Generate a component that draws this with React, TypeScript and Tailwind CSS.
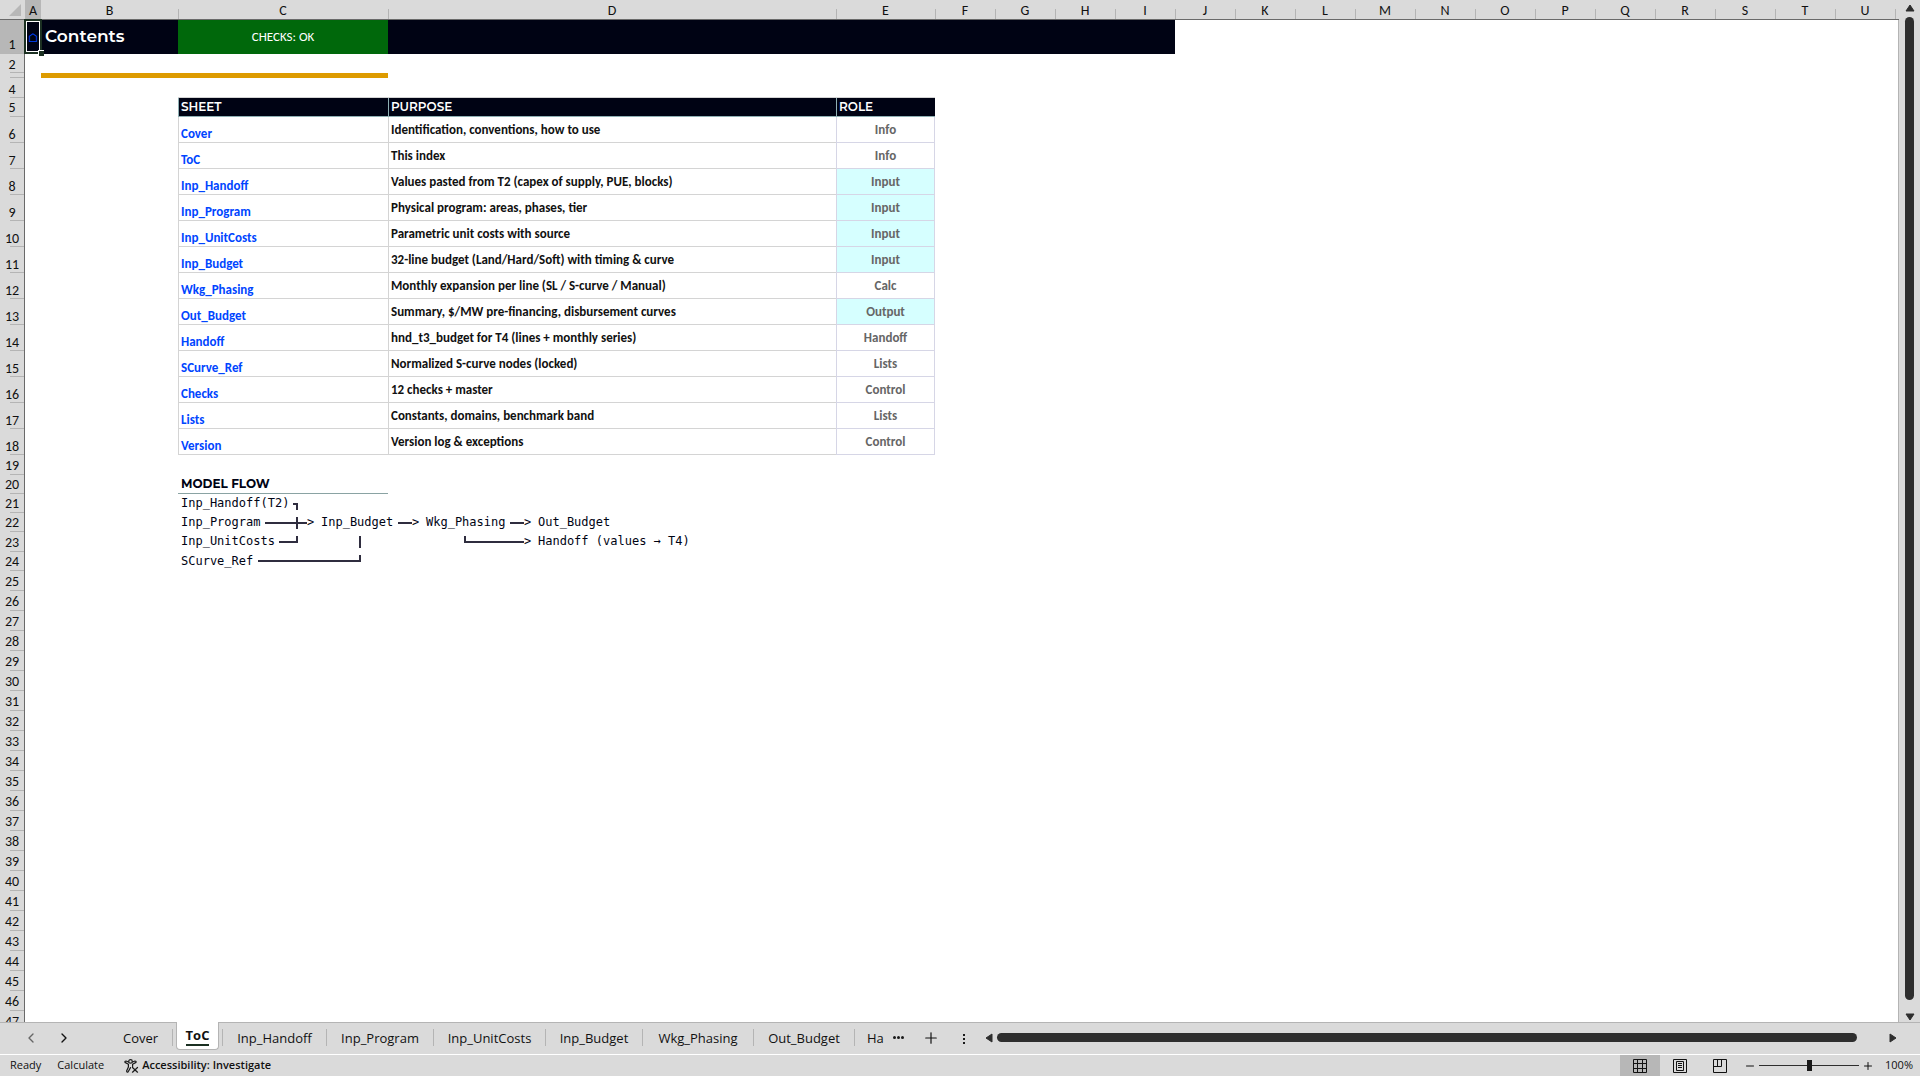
import { useState } from 'react';
import type { ReactNode } from 'react';
import { ChevronLeft, ChevronRight, Plus, Minus } from 'lucide-react';
import clsx from 'clsx';

const letters = 'ABCDEFGHIJKLMNOPQRSTU'.split('');

const sheets = [
  { row: 6, name: 'Cover', purpose: 'Identification, conventions, how to use', role: 'Info' },
  { row: 7, name: 'ToC', purpose: 'This index', role: 'Info' },
  { row: 8, name: 'Inp_Handoff', purpose: 'Values pasted from T2 (capex of supply, PUE, blocks)', role: 'Input' },
  { row: 9, name: 'Inp_Program', purpose: 'Physical program: areas, phases, tier', role: 'Input' },
  { row: 10, name: 'Inp_UnitCosts', purpose: 'Parametric unit costs with source', role: 'Input' },
  { row: 11, name: 'Inp_Budget', purpose: '32-line budget (Land/Hard/Soft) with timing & curve', role: 'Input' },
  { row: 12, name: 'Wkg_Phasing', purpose: 'Monthly expansion per line (SL / S-curve / Manual)', role: 'Calc' },
  { row: 13, name: 'Out_Budget', purpose: 'Summary, $/MW pre-financing, disbursement curves', role: 'Output' },
  { row: 14, name: 'Handoff', purpose: 'hnd_t3_budget for T4 (lines + monthly series)', role: 'Handoff' },
  { row: 15, name: 'SCurve_Ref', purpose: 'Normalized S-curve nodes (locked)', role: 'Lists' },
  { row: 16, name: 'Checks', purpose: '12 checks + master', role: 'Control' },
  { row: 17, name: 'Lists', purpose: 'Constants, domains, benchmark band', role: 'Lists' },
  { row: 18, name: 'Version', purpose: 'Version log & exceptions', role: 'Control' },
];

// each step takes a number of 7px character cells; `line` is a connector path
type Step = { text?: string; line?: string; cells: number };

const flow: { row: number; height: string; steps: Step[] }[] = [
  {
    row: 21,
    height: 'h-[19px]',
    steps: [
      { text: 'Inp_Handoff(T2)', cells: 16 },
      { line: 'M0 10H4V16', cells: 1 },
    ],
  },
  {
    row: 22,
    height: 'h-[19px]',
    steps: [
      { text: 'Inp_Program', cells: 12 },
      { line: 'M0 10H42M32 4V16', cells: 6 },
      { text: '>', cells: 2 },
      { text: 'Inp_Budget', cells: 11 },
      { line: 'M0 10H14', cells: 2 },
      { text: '>', cells: 2 },
      { text: 'Wkg_Phasing', cells: 12 },
      { line: 'M0 10H14', cells: 2 },
      { text: '>', cells: 2 },
      { text: 'Out_Budget', cells: 11 },
    ],
  },
  {
    row: 23,
    height: 'h-[20px]',
    steps: [
      { text: 'Inp_UnitCosts', cells: 14 },
      { line: 'M0 10H18V4', cells: 3 },
      { cells: 8 },
      { line: 'M4 4V16', cells: 1 },
      { cells: 14 },
      { line: 'M4 4V10H63', cells: 9 },
      { text: '>', cells: 2 },
      { text: 'Handoff (values → T4)', cells: 22 },
    ],
  },
  {
    row: 24,
    height: 'h-[19px]',
    steps: [
      { text: 'SCurve_Ref', cells: 11 },
      { line: 'M0 9H102V3', cells: 15 },
    ],
  },
];

const emptyRows = Array.from({ length: 23 }, (_, i) => i + 25);

const tabs = [
  { name: 'Inp_Handoff', className: 'w-[105px] ml-[3px] border-l' },
  { name: 'Inp_Program', className: 'w-[107px]' },
  { name: 'Inp_UnitCosts', className: 'w-[112px]' },
  { name: 'Inp_Budget', className: 'w-[97px]' },
  { name: 'Wkg_Phasing', className: 'w-[111px]' },
  { name: 'Out_Budget', className: 'w-[101px]' },
];

function Row({ n, height, children }: { n: number; height: string; children?: ReactNode }) {
  return (
    <tr className={height}>
      <th
        scope="row"
        className={clsx(
          'relative border-r border-[#6a6a6a] p-0 pl-[5px] align-bottom text-[14px] leading-[17px] font-normal text-[#111]',
          'after:absolute after:right-0 after:bottom-0 after:h-px after:w-[14px] after:bg-[#b4b4b4]',
          n === 1 ? 'bg-[#b7b7b7]' : 'bg-[#dadada]',
          (n === 1 || n === 5 || n > 18) && 'pb-[1px]',
          n < 10 ? 'text-center pr-[5px]' : 'text-left',
        )}
      >
        {n === 3 ? null : n}
      </th>
      {children}
      <td className="border-r border-[#b4b4b4] p-0" />
    </tr>
  );
}

function FlowLine({ steps }: { steps: Step[] }) {
  return (
    <div className="flex h-[19px] items-center whitespace-pre pl-[3px] font-['DejaVu_Sans_Mono',monospace] text-[12px] leading-[19px] text-[#000314]">
      {steps.map((step, i) => (
        <span key={i} className="shrink-0" style={{ width: step.cells * 7 }}>
          {step.line ? (
            <svg width={step.cells * 7} height="19" fill="none" stroke="#2f2d3f" strokeWidth="2" className="block">
              <path d={step.line} />
            </svg>
          ) : (
            step.text
          )}
        </span>
      ))}
    </div>
  );
}

function Sheet() {
  return (
    <table className="w-full table-fixed border-separate border-spacing-0 font-['Carlito','Lato',sans-serif] text-[13px] leading-[17px] text-[#111]">
      <colgroup>
        <col className="w-[25px]" />
        <col className="w-[16px]" />
        <col className="w-[137px]" />
        <col className="w-[210px]" />
        <col className="w-[448px]" />
        <col className="w-[99px]" />
        {letters.slice(5).map((l) => (
          <col key={l} className="w-[60px]" />
        ))}
        <col />
      </colgroup>
      <thead>
        <tr className="h-[20px] bg-[#dadada]">
          <td className="border-b border-[#6a6a6a] p-0">
            <svg width="12" height="12" className="ml-[9px]">
              <path d="M12 0V12H0Z" fill="#b7b7b7" />
            </svg>
          </td>
          {letters.map((l) => (
            <th
              key={l}
              scope="col"
              className={clsx(
                'relative border-b border-[#6a6a6a] p-0 pt-[2px] text-center text-[14px] leading-[17px] font-normal text-[#111]',
                l === 'A'
                  ? 'bg-[#b7b7b7]'
                  : 'after:absolute after:right-[-1px] after:bottom-0 after:h-[10px] after:w-px after:bg-[#b4b4b4]',
              )}
            >
              {l}
            </th>
          ))}
          <td className="border-b border-[#6a6a6a] p-0" />
        </tr>
      </thead>
      <tbody>
        <Row n={1} height="h-[34px]">
          <td className="relative bg-[#000314] p-0 text-center">
            <a href="#cover" className="text-[#0045ff]">⌂</a>
            <div className="absolute -inset-x-px -top-px bottom-0 border-2 border-[#1b3022]">
              <div className="h-full border border-white" />
            </div>
            <div className="absolute -right-[3px] -bottom-[2px] size-[6px] border-t border-l border-white bg-[#1b3022]" />
          </td>
          <td className="bg-[#000314] p-0 pb-[2px] pl-[4px] font-['Montserrat','Inter',sans-serif] text-[17px] leading-[22px] font-semibold text-white">
            Contents
          </td>
          <td className="bg-[#00680b] p-0 pb-[1px] text-center text-white">CHECKS: OK</td>
          <td colSpan={6} className="bg-[#000314] p-0" />
          <td colSpan={12} className="p-0" />
        </Row>
        <Row n={2} height="h-[19px]">
          <td colSpan={21} className="p-0" />
        </Row>
        <Row n={3} height="h-[5px]">
          <td className="p-0" />
          <td colSpan={2} className="bg-[#dd9b00] p-0" />
          <td colSpan={18} className="p-0" />
        </Row>
        <Row n={4} height="h-[20px]">
          <td colSpan={2} className="p-0" />
          <td colSpan={3} className="border-b border-[#d4d4d4] p-0" />
          <td colSpan={16} className="p-0" />
        </Row>
        <Row n={5} height="h-[19px]">
          <td colSpan={2} className="p-0" />
          {['SHEET', 'PURPOSE', 'ROLE'].map((title) => (
            <td
              key={title}
              className="border-b border-l border-[#8fb0b4] bg-[#000314] p-0 pl-[2px] font-['Montserrat','Inter',sans-serif] text-[12px] leading-[16px] font-semibold text-white"
            >
              {title}
            </td>
          ))}
          <td colSpan={16} className="p-0" />
        </Row>
        {sheets.map(({ row, name, purpose, role }) => (
          <Row key={row} n={row} height="h-[26px]">
            <td colSpan={2} className="p-0" />
            <td className="border-b border-l border-[#d4d4d4] p-0 pl-[2px] align-bottom font-bold">
              <a href={`#${name}`} className="text-[#0045ff]">{name}</a>
            </td>
            <td className="border-b border-l border-[#d4d4d4] p-0 pl-[2px] font-bold">{purpose}</td>
            <td
              className={clsx(
                'border-r border-b border-l border-[#d6d6e6] p-0 text-center font-bold text-[#666]',
                (role === 'Input' || role === 'Output') && 'bg-[#d6ffff]',
              )}
            >
              {role}
            </td>
            <td colSpan={16} className="p-0" />
          </Row>
        ))}
        <Row n={19} height="h-[20px]">
          <td colSpan={21} className="p-0" />
        </Row>
        <Row n={20} height="h-[19px]">
          <td colSpan={2} className="p-0" />
          <td className="border-b border-[#8aa3a3] p-0 pl-[3px] font-['Montserrat','Inter',sans-serif] text-[12px] leading-[16px] font-bold text-[#000314]">
            MODEL FLOW
          </td>
          <td colSpan={18} className="p-0" />
        </Row>
        {flow.map(({ row, height, steps }) => (
          <Row key={row} n={row} height={height}>
            <td colSpan={2} className="p-0" />
            <td colSpan={19} className="p-0 align-top">
              <FlowLine steps={steps} />
            </td>
          </Row>
        ))}
        {emptyRows.map((n) => (
          <Row key={n} n={n} height="h-[20px]">
            <td colSpan={21} className="p-0" />
          </Row>
        ))}
      </tbody>
    </table>
  );
}

function Arrow({ d, label, className }: { d: string; label: string; className?: string }) {
  return (
    <button type="button" aria-label={label} className={clsx('shrink-0', className)}>
      <svg width="10" height="10" fill="#2e2e2e" stroke="#2e2e2e" strokeLinejoin="round">
        <path d={d} />
      </svg>
    </button>
  );
}

function SheetTabs() {
  return (
    <div className="flex h-[33px] shrink-0 items-stretch border-t border-b border-t-[#b4b4b4] border-b-white bg-[#dadada] font-['Open_Sans','Noto_Sans',sans-serif] text-[13px] text-[#111]">
      <div className="flex w-[109px] shrink-0 items-center gap-[17px] pb-[2px] pl-[23px]">
        <button type="button" aria-label="Previous sheet" className="text-[#666]">
          <ChevronLeft size={16} strokeWidth={2} />
        </button>
        <button type="button" aria-label="Next sheet">
          <ChevronRight size={16} strokeWidth={2} />
        </button>
      </div>
      <button type="button" className="mt-[6px] mb-[8px] w-[64px] shrink-0 border-r border-[#b4b4b4]">Cover</button>
      <button
        type="button"
        className="-mt-px mb-[4px] ml-[3px] flex w-[43px] shrink-0 items-center justify-center rounded-b-[4px] border border-t-0 border-[#b4b4b4] bg-white font-bold"
      >
        <span className="border-b-2 border-[#1b3022] leading-[18px]">ToC</span>
      </button>
      {tabs.map(({ name, className }) => (
        <button key={name} type="button" className={clsx('mt-[6px] mb-[8px] shrink-0 border-r border-[#b4b4b4]', className)}>
          {name}
        </button>
      ))}
      <button type="button" className="mt-[6px] mb-[8px] ml-[12px] shrink-0">Ha</button>
      <button type="button" aria-label="More sheets" className="ml-[9px] flex shrink-0 items-center gap-[1px] pb-[2px]">
        <span className="size-[3px] rounded-full bg-[#1a1a1a]" />
        <span className="size-[3px] rounded-full bg-[#1a1a1a]" />
        <span className="size-[3px] rounded-full bg-[#1a1a1a]" />
      </button>
      <button type="button" aria-label="New sheet" className="ml-[18px] shrink-0 pb-[2px]">
        <Plus size={18} strokeWidth={1.6} />
      </button>
      <div className="ml-[23px] flex shrink-0 flex-col justify-center gap-[2px]">
        <span className="size-[2px] bg-[#1a1a1a]" />
        <span className="size-[2px] bg-[#1a1a1a]" />
        <span className="size-[2px] bg-[#1a1a1a]" />
      </div>
      <div className="ml-[19px] flex min-w-0 flex-1 items-center pr-[22px] pb-[2px]">
        <Arrow label="Scroll left" d="M8 1V9L2 5Z" />
        <div className="mr-[31px] ml-[3px] h-[9px] flex-1 rounded-full bg-[#2e2e2e]" />
        <Arrow label="Scroll right" d="M2 1V9L8 5Z" />
      </div>
    </div>
  );
}

function StatusBar() {
  const [zoom, setZoom] = useState(50);
  return (
    <div className="flex h-[21px] shrink-0 items-center bg-[#dadada] font-['Open_Sans','Noto_Sans',sans-serif] text-[11px] text-[#111]">
      <span className="ml-[10px]">Ready</span>
      <span className="ml-[16px]">Calculate</span>
      <button type="button" className="ml-[20px] flex items-center gap-[3px] font-semibold">
        <svg width="15" height="14" fill="none" stroke="#1a1a1a" strokeWidth="1.2" strokeLinecap="round" strokeLinejoin="round">
          <circle cx="6.5" cy="2.4" r="1.8" />
          <path d="M4.6 3 2 2Q.6 2 1 3.4L4.4 5.2V8L2.6 12Q2.8 13.6 4 13L6.5 8.6M8.4 3 11 2Q12.4 2 12 3.4L8.6 5.2V7.4M8.5 8.5 13.5 13.2M13.5 8.5 8.5 13.2" />
        </svg>
        Accessibility: Investigate
      </button>
      <div className="ml-auto flex h-full items-center">
        <button type="button" aria-label="Normal view" className="flex h-full w-[40px] items-center justify-center bg-[#b7b7b7]">
          <svg width="14" height="14" fill="none" stroke="#111">
            <path d="M.5 .5H13.5V13.5H.5ZM4.5 .5V13.5M9.5 .5V13.5M.5 4.5H13.5M.5 9.5H13.5" />
          </svg>
        </button>
        <button type="button" aria-label="Page layout" className="flex h-full w-[40px] items-center justify-center">
          <svg width="14" height="14" fill="none" stroke="#111">
            <path d="M.5 .5H13.5V13.5H.5ZM3.5 2.5H10.5V11.5H3.5ZM5 4.5H9M5 6.5H9M5 8.5H9" />
          </svg>
        </button>
        <button type="button" aria-label="Page break preview" className="flex h-full w-[40px] items-center justify-center">
          <svg width="14" height="14" fill="none" stroke="#111">
            <path d="M.5 .5H13.5V13.5H.5ZM.5 7.5H8.5V.5M4.5 .5V7.5" />
          </svg>
        </button>
        <button type="button" aria-label="Zoom out" className="ml-[4px]">
          <Minus size={12} strokeWidth={2} />
        </button>
        <input
          type="range"
          aria-label="Zoom"
          min={0}
          max={100}
          value={zoom}
          onChange={(e) => setZoom(Number(e.target.value))}
          className="mx-[3px] h-[11px] w-[100px] appearance-none bg-[linear-gradient(#2e2e2e,#2e2e2e)] bg-[length:100%_1px] bg-center bg-no-repeat [&::-webkit-slider-thumb]:h-[11px] [&::-webkit-slider-thumb]:w-[5px] [&::-webkit-slider-thumb]:appearance-none [&::-webkit-slider-thumb]:bg-[#1a1a1a]"
        />
        <button type="button" aria-label="Zoom in">
          <Plus size={12} strokeWidth={2} />
        </button>
        <span className="mr-[7px] ml-[11px]">100%</span>
      </div>
    </div>
  );
}

export default function App() {
  return (
    <div className="flex h-screen flex-col overflow-hidden bg-[#dadada]">
      <div className="flex min-h-0 flex-1">
        <main className="min-w-0 flex-1 overflow-hidden bg-white">
          <Sheet />
        </main>
        <div className="flex w-[21px] shrink-0 flex-col items-center">
          <Arrow label="Scroll up" d="M1 8H9L5 2Z" className="mt-[3px] h-[10px]" />
          <div className="mt-[4px] mb-[12px] w-[9px] flex-1 rounded-full bg-[#2e2e2e]" />
          <Arrow label="Scroll down" d="M1 2H9L5 8Z" className="h-[10px]" />
        </div>
      </div>
      <SheetTabs />
      <StatusBar />
    </div>
  );
}
